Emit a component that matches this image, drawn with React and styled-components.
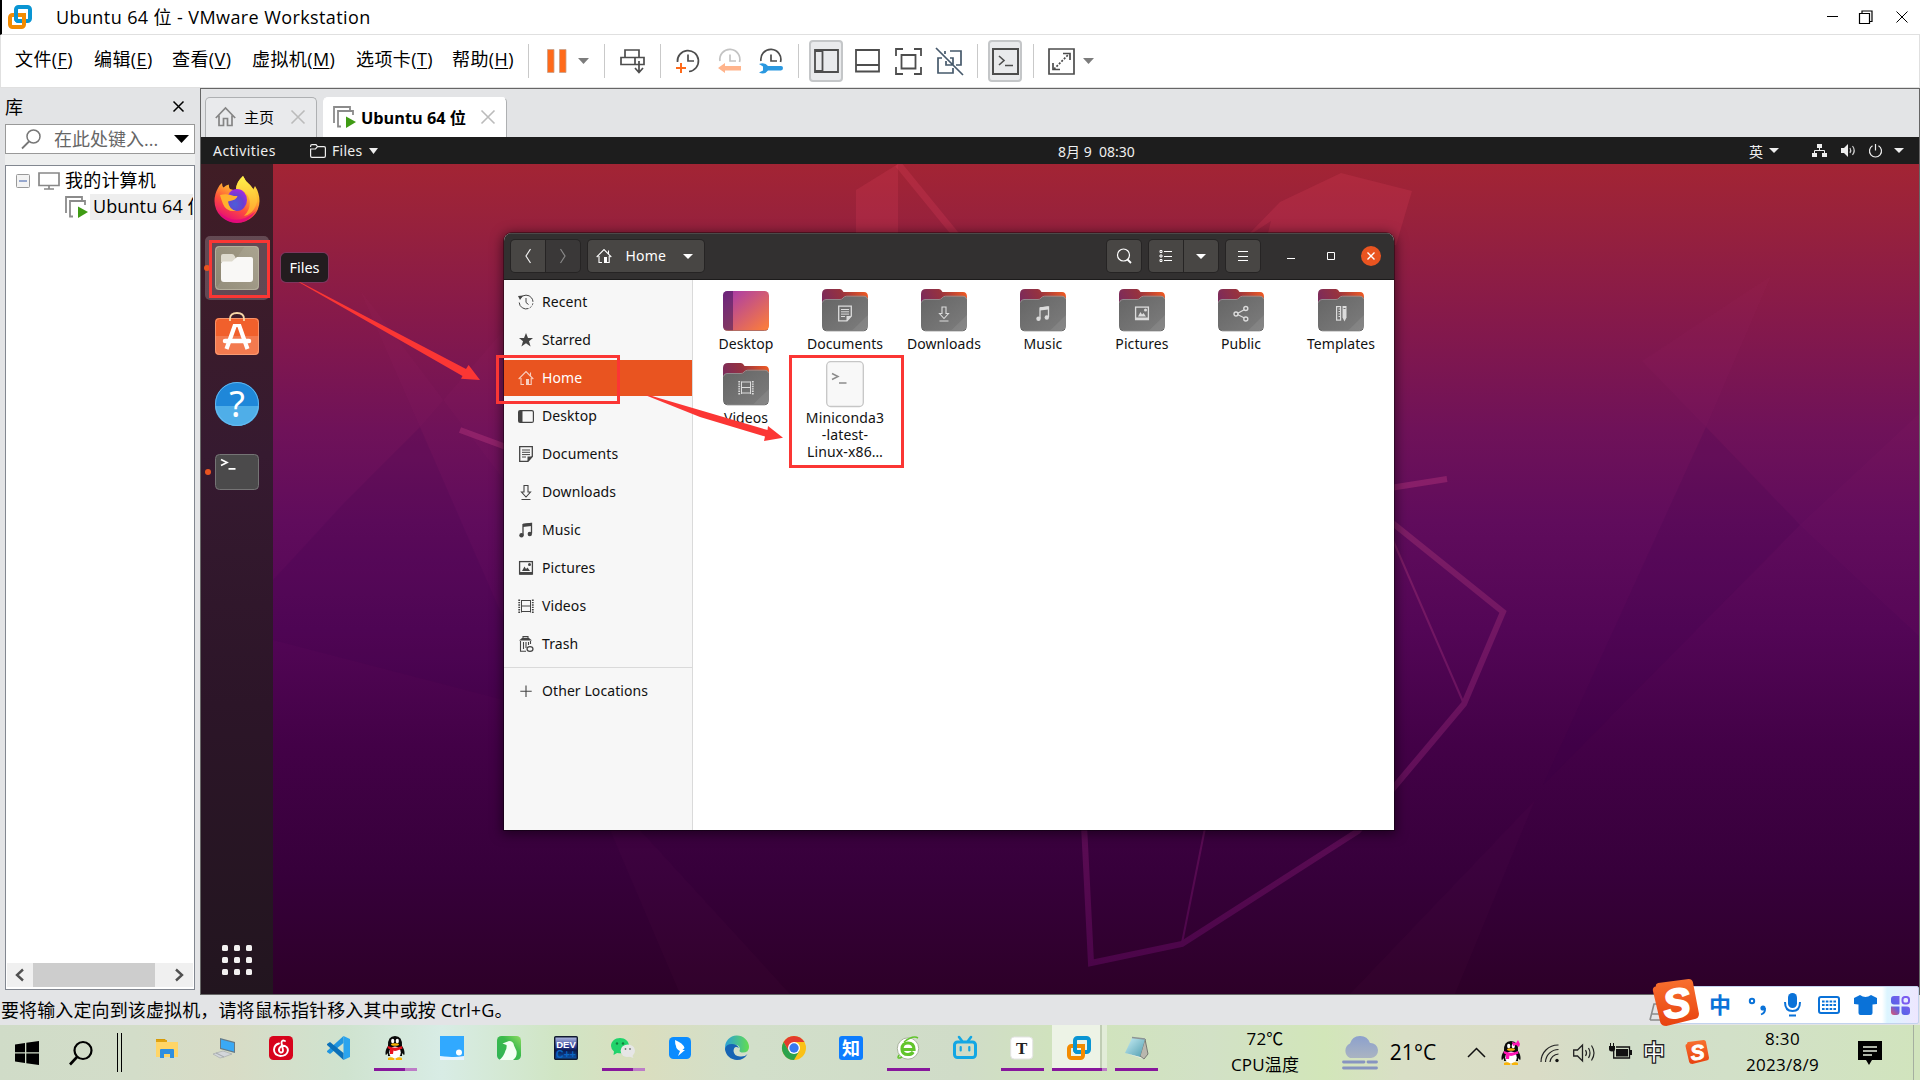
import React from "react";
import styled, { createGlobalStyle, css } from "styled-components";

const winFont = `"Open Sans", "Noto Sans CJK SC", sans-serif`;
const ubuntuFont = `"Noto Sans", "Noto Sans CJK SC", sans-serif`;

const GlobalStyle = createGlobalStyle`
  * { box-sizing: border-box; }
  body { margin: 0; overflow: hidden; background: #e3e4e6; }
  svg { display: block; flex: none; overflow: visible; }
`;

const Screen = styled.div`
  position: relative;
  display: flex;
  flex-direction: column;
  width: 1920px;
  height: 1080px;
  overflow: hidden;
  background: #e3e4e6;
  color: #000;
  font-family: ${winFont};
  font-size: 18px;
  white-space: nowrap;
`;

/* ---------- window chrome ---------- */
const TitleBar = styled.header`
  display: flex;
  align-items: center;
  height: 35px;
  padding: 0 7px 0 6px;
  background: #fff;
  border-bottom: 1px solid #e0e0e0;
  border-left: 2px solid #000;
`;
const Title = styled.div`
  margin-left: 24px;
  flex: 1;
  line-height: 34px;
  letter-spacing: 0.4px;
`;
const WindowControls = styled.div`
  display: flex;
  align-items: center;
  gap: 23px;
  padding-right: 5px;
`;
const MenuBar = styled.nav`
  display: flex;
  align-items: center;
  height: 53px;
  padding-left: 14px;
  background: #fff;
  border: 1px solid #e0e0e0;
  border-top: 0;
`;
const MenuItem = styled.div`
  width: ${(p) => p.$w}px;
  line-height: 48px;
  height: 52px;
  letter-spacing: 0.4px;
  u { text-underline-offset: 2px; text-decoration-thickness: 1px; }
`;
const Divider = styled.i`
  width: 1px;
  height: 34px;
  background: #c9c9c9;
`;
const Tool = styled.div`
  display: flex;
  align-items: center;
  justify-content: center;
  width: ${(p) => p.$w || 34}px;
  height: 42px;
  margin-left: ${(p) => p.$ml || 0}px;
  border-radius: 4px;
  border: 2px solid ${(p) => (p.$on ? "#c4c6c8" : "transparent")};
  background: ${(p) => (p.$on ? "#e9eaec" : "transparent")};
`;

/* ---------- library ---------- */
const Body = styled.main`
  display: flex;
  height: 907px;
`;
const Library = styled.aside`
  display: flex;
  flex-direction: column;
  width: 200px;
  padding: 0 5px 0 5px;
`;
const LibraryHead = styled.div`
  display: flex;
  justify-content: space-between;
  align-items: center;
  height: 36px;
  padding: 0 11px 0 0;
`;
const SearchBox = styled.div`
  display: flex;
  align-items: center;
  height: 30px;
  padding: 0 5px 0 15px;
  border: 1px solid #999;
  background: #fff;
  color: #666;
  span { margin-left: 13px; flex: 1; line-height: 26px; }
`;
const Spacer = styled.div`
  height: 11px;
  background: #eeefef;
`;
const Tree = styled.div`
  display: flex;
  flex-direction: column;
  width: 190px;
  height: 825px;
  padding: 2px 1px 2px;
  overflow: hidden;
  border: 1px solid #828790;
  background: #fff;
`;
const TreeRow = styled.div`
  display: flex;
  align-items: center;
  height: 26px;
  padding-left: ${(p) => p.$pad}px;
  overflow: hidden;
`;
const TreeText = styled.span`
  flex: 1;
  margin-left: ${(p) => p.$ml}px;
  padding-left: 3px;
  height: 26px;
  line-height: 24px;
  overflow: hidden;
  background: ${(p) => (p.$sel ? "#eeeeee" : "none")};
  letter-spacing: ${(p) => (p.$sel ? 0.1 : 0.2)}px;
`;
const ScrollBar = styled.div`
  display: flex;
  align-items: center;
  height: 24px;
  margin-top: auto;
  padding: 0 8px 0 7px;
  background: #f0f0f0;
`;
const Thumb = styled.i`
  width: 123px;
  height: 24px;
  margin: 0 19px 0 8px;
  background: #cdcdcd;
`;

/* ---------- virtual machine view ---------- */
const Machine = styled.section`
  display: flex;
  flex-direction: column;
  width: 1720px;
  border: 1px solid #666;
`;
const Tabs = styled.div`
  display: flex;
  align-items: flex-end;
  gap: 6px;
  height: 48px;
  padding-left: 4px;
`;
const Tab = styled.div`
  display: flex;
  align-items: center;
  width: ${(p) => p.$w}px;
  height: 40px;
  padding: 0 11px 2px 9px;
  border: 1px solid ${(p) => (p.$on ? "#fff" : "#aeb0b2")};
  border-bottom: 0;
  border-right-color: #aeb0b2;
  border-radius: 5px 5px 0 0;
  background: ${(p) => (p.$on ? "#fff" : "#e9eaec")};
  font-size: ${(p) => (p.$on ? 16.3 : 15)}px;
  font-weight: ${(p) => (p.$on ? 700 : 400)};
  span { margin-left: ${(p) => (p.$on ? 5 : 8)}px; flex: 1; }
`;
const TopBar = styled.div`
  display: flex;
  align-items: center;
  height: 27px;
  padding-left: 12px;
  background: #1d1d1d;
  color: #efefef;
  font-family: ${ubuntuFont};
  font-size: 14px;
`;
const BarText = styled.span`
  width: ${(p) => p.$w}px;
  margin-left: ${(p) => p.$ml || 0}px;
  letter-spacing: ${(p) => p.$ls || 0}px;
  white-space: pre;
`;
const Slot = styled.span`
  margin-left: ${(p) => p.$ml}px;
`;
const Desktop = styled.div`
  position: relative;
  display: flex;
  flex: 1;
  overflow: hidden;
  background: linear-gradient(#a32434 0, #99223b 6%, #85194b 19%, #6f1259 32%, #600c5c 43%, #530656 56%, #430147 70%, #36003a 86%, #2d0028 100%);
`;
const Wallpaper = styled.svg`
  position: absolute;
  left: 0;
  top: 0;
`;
const Dock = styled.div`
  position: relative;
  display: flex;
  flex-direction: column;
  align-items: center;
  width: 72px;
  height: 830px;
  padding: 4px 0 19px;
  background: linear-gradient(#401d25, #361a30 35%, #2c1528 65%, #22151f);
`;
const DockItem = styled.div`
  display: flex;
  align-items: center;
  justify-content: center;
  width: 64px;
  height: 64px;
  margin-bottom: 4px;
  padding-bottom: ${(p) => p.$lift || 0}px;
  border-radius: 5px;
  background: ${(p) => (p.$on ? "rgba(255,255,255,.2)" : "none")};
`;
const AppsButton = styled.div`
  display: grid;
  grid-template-columns: repeat(3, 6px);
  gap: 6px;
  margin-top: auto;
  i { width: 6px; height: 6px; border-radius: 1.5px; background: #f2f0f0; }
`;
const Tooltip = styled.div`
  position: absolute;
  left: 79px;
  top: 88px;
  width: 49px;
  height: 31px;
  border: 1px solid rgba(150, 60, 110, 0.8);
  border-radius: 6px;
  background: #231c1f;
  color: #fff;
  font: 14.5px/28px ${ubuntuFont};
  text-align: center;
`;

/* ---------- file manager ---------- */
const FileWindow = styled.div`
  position: absolute;
  left: 303px;
  top: 69px;
  display: flex;
  flex-direction: column;
  width: 890px;
  height: 597px;
  overflow: hidden;
  border-radius: 8px 8px 0 0;
  background: #fff;
  font-family: ${ubuntuFont};
  font-size: 14px;
`;
const WindowShadow = styled.div`
  position: absolute;
  left: 303px;
  top: 69px;
  width: 890px;
  height: 597px;
  border-radius: 8px 8px 0 0;
  box-shadow: 0 2px 12px 2px rgba(0, 0, 0, 0.5), 0 0 0 1px rgba(0, 0, 0, 0.35);
`;
const HeaderBar = styled.div`
  display: flex;
  align-items: center;
  height: 47px;
  padding: 0 13px 1px 7px;
  background: #323030;
  border-top: 1px solid #4b4949;
  border-bottom: 1px solid #1c1b1b;
  color: #fff;
`;
const HeaderButton = styled.div`
  display: flex;
  align-items: center;
  justify-content: center;
  width: ${(p) => p.$w || 34}px;
  height: 32px;
  margin-left: ${(p) => p.$ml || 0}px;
  padding-right: ${(p) => p.$pr || 0}px;
  border-radius: ${(p) => p.$r || "4px"};
  background: ${(p) => (p.$dim ? "#3a3838" : "#484644")};
  box-shadow: 0 0 0 1px #262424;
  span { width: 57px; margin-left: 14px; letter-spacing: 0.2px; line-height: 32px; height: 32px; }
`;
const Stretch = styled.i`
  flex: 1;
`;
const CloseButton = styled.div`
  display: grid;
  place-items: center;
  width: 20px;
  height: 20px;
  margin-left: 26px;
  border-radius: 50%;
  background: #e95420;
`;
const WindowBody = styled.div`
  display: flex;
  flex: 1;
`;
const Places = styled.div`
  width: 189px;
  padding-top: 4px;
  border-right: 1px solid #dadada;
  background: #f7f7f7;
`;
const Place = styled.div`
  display: flex;
  align-items: center;
  height: 36px;
  margin-bottom: 2px;
  padding: 0 0 1px 14px;
  color: ${(p) => (p.$on ? "#fff" : "#111")};
  background: ${(p) => (p.$on ? "#e95420" : "none")};
  svg { color: ${(p) => (p.$on ? "#f9cfc0" : "#444")}; }
  span { margin-left: 8px; letter-spacing: 0.08px; }
`;
const PlacesRule = styled.div`
  height: 1px;
  margin: 5px 0;
  background: #dadada;
`;
const FileGrid = styled.div`
  display: grid;
  grid-template-columns: repeat(6, 99px) 101px;
  grid-auto-rows: 74px;
  padding: 9px 0 0 3.5px;
  height: 200px;
`;
const FileItem = styled.div`
  display: flex;
  flex-direction: column;
  align-items: center;
  text-align: center;
  line-height: 17px;
  color: #111;
`;
const FileLabel = styled.div`
  margin-top: ${(p) => (p.$tall ? 1 : 4)}px;
  letter-spacing: ${(p) => (p.$tall ? 0.15 : 0.08)}px;
`;
const FileIconSlot = styled.div`
  margin-top: -2px;
`;
const Annotations = styled.svg`
  position: absolute;
  left: 0;
  top: 0;
  pointer-events: none;
`;

/* ---------- status + taskbar ---------- */
const StatusBar = styled.div`
  height: 30px;
  padding-left: 1px;
  line-height: 31px;
  letter-spacing: 0.12px;
`;
const InputBar = styled.div`
  position: absolute;
  left: 1660px;
  top: 986px;
  display: flex;
  align-items: center;
  width: 259px;
  height: 38px;
  padding-left: 48px;
  border: 1px solid #c3d3ee;
  border-radius: 2px;
  background: linear-gradient(90deg, #fff 86%, #dcf5ff 88%, #eee6ff);
  color: #0a72d8;
  b { width: 22px; font-size: 22px; line-height: 28px; height: 30px; }
`;
const InputLogo = styled.svg`
  position: absolute;
  left: 1647px;
  top: 979px;
`;
const Taskbar = styled.footer`
  display: flex;
  align-items: center;
  height: 55px;
  padding-left: 15px;
  background: linear-gradient(90deg, #d0dcc8 0, #d3ddc9 7%, #d8dcc6 12%, #cfe3cf 18%, #d8ece5 23%, #d0e5c4 29%, #dadebf 33.5%, #d2dfca 39%, #d0dcc8 50%, #d0e4bb 56%, #d2e1c6 63%, #d2e6b9 69%, #d9dfc6 73%, #dadcc6 80%, #d1dec9 85%, #d2e0c8 90%, #d1e4bd 100%);
`;
const TaskSeparator = styled.i`
  width: 5px;
  height: 39px;
  margin: 0 17px 0 24px;
  border: solid #000;
  border-width: 0 1px;
`;
const Task = styled.div`
  position: relative;
  display: flex;
  justify-content: center;
  align-items: center;
  width: 57px;
  height: 55px;
  padding: 0 1px 9px 0;
  ${(p) => p.$on && css`
    background: linear-gradient(90deg, transparent 1px, #edf3e6 1px 49px, #c0cdb4 49px 51px, #e2ecd8 51px 56px, transparent 56px) 0 0 / 57px 43px no-repeat;
  `}
  &::after {
    content: "";
    position: absolute;
    bottom: 9px;
    left: ${(p) => (p.$on ? 1 : 7)}px;
    width: ${(p) => (p.$line ? (p.$on ? 55 : 43) : 0)}px;
    height: 3px;
    background: linear-gradient(90deg, #87179c ${(p) => p.$line || 100}%, #bd7cc7 ${(p) => p.$line || 100}%);
  }
`;
const TrayItem = styled.div`
  display: flex;
  justify-content: center;
  width: ${(p) => p.$w}px;
  margin-left: ${(p) => p.$ml}px;
  padding-bottom: ${(p) => p.$lift || 0}px;
  font-size: ${(p) => p.$fs || 17}px;
  line-height: 25.5px;
  letter-spacing: ${(p) => p.$ls || 0}px;
  text-align: center;
`;
const OutlinedGlyph = styled.span`
  color: #fff;
  font-size: 22px;
  -webkit-text-stroke: 2.6px #222;
  paint-order: stroke fill;
`;
const TrayEdge = styled.i`
  width: 1px;
  height: 55px;
  margin-left: 31px;
  background: #a5afa0;
`;

/* ---------- icons ---------- */
const Svg = ({ w = 16, h = w, vb, children, ...rest }) => (
  <svg width={w} height={h} viewBox={vb || `0 0 ${w} ${h}`} fill="none" {...rest}>{children}</svg>
);
const Caret = ({ w = 10, h = 5, c = "#fff" }) => (
  <Svg w={w} h={h}><path d={`M0 0H${w}L${w / 2} ${h}Z`} fill={c} /></Svg>
);
const Cross = ({ s = 12, c = "#000", t = 1.3 }) => (
  <Svg w={s}><path d={`M.5 .5L${s - 0.5} ${s - 0.5}M${s - 0.5} .5L.5 ${s - 0.5}`} stroke={c} strokeWidth={t} /></Svg>
);
const VmLogo = () => (
  <Svg w={24}>
    <rect x="8" y="2" width="14" height="14" rx="2.5" stroke="#0a95d3" strokeWidth="4" />
    <path d="M8 10H4.5A2.5 2.5 0 0 0 2 12.5V19.5A2.5 2.5 0 0 0 4.5 22H13.5A2.5 2.5 0 0 0 16 19.5V10H8" stroke="#f38b00" strokeWidth="4" />
    <path d="M8 6V13.5A2.5 2.5 0 0 0 10.5 16H14" stroke="#0a95d3" strokeWidth="4" />
  </Svg>
);
const VmRun = () => (
  <Svg w={23} h={22}>
    <path d="M1 17V1H17V4M8 20.5H5V5H20V9" stroke="#8b8b8b" strokeWidth="1.8" />
    <path d="M13 10.5L23 16L13 22Z" fill="#3f9b14" />
  </Svg>
);
const HouseOutline = () => (
  <Svg w={21} h={20}><path d="M.8 11L10.5 1L20.2 11M4 8.5V18.5H8.5V11.5H12.5V18.5H17V8.5" stroke="#858585" strokeWidth="1.7" /></Svg>
);
const Home16 = () => (
  <Svg w={16}><path d="M.7 9L8 1.5L15.3 9M3 8V14.5H6M11 14.5H13.2V8M12.5 6V2.5" stroke="currentColor" strokeWidth="1.1" /><path d="M8 9H11V15H8Z" fill="currentColor" /></Svg>
);

const glyphs = {
  recent: <><path d="M2.5 4A6.9 6.9 0 1 1 1.2 8.5" stroke="currentColor" strokeDasharray="17 1.5 2 1.5 2 1.5" /><path d="M8 4V8.5L10.5 10.5" stroke="currentColor" /><path d="M0 2L5 1.5L2 6Z" fill="currentColor" /></>,
  star: <path d="M8 1L10 6H15L11 9.2L12.6 14.5L8 11.3L3.4 14.5L5 9.2L1 6H6Z" fill="currentColor" />,
  desktop: <><rect x=".6" y="2.6" width="14.8" height="11.8" rx="1.5" stroke="currentColor" strokeWidth="1.2" /><path d="M1 3H4.5V14H1Z" fill="currentColor" /></>,
  documents: <><path d="M1.7 .7H14.3V10.5L10 15.3H1.7Z" stroke="currentColor" strokeWidth="1.3" /><path d="M4 4H12M4 6.3H12M4 8.6H12M4 11H8" stroke="currentColor" /><path d="M9.5 10.5H14.5L9.5 15.5Z" fill="currentColor" /></>,
  downloads: <path d="M6 1.5H10V8H12.5L8 13L3.5 8H6ZM3.5 15.5H12.5" stroke="currentColor" strokeWidth="1.1" />,
  music: <><path d="M5 13V2.5L13.5 1.5V11.5" stroke="currentColor" strokeWidth="1.3" /><path d="M5 1.8L13.5 .8V4L5 5Z" fill="currentColor" /><circle cx="3.5" cy="13.3" r="2.2" fill="currentColor" /><circle cx="11.8" cy="12" r="2.2" fill="currentColor" /></>,
  pictures: <><rect x="1.6" y="1.6" width="12.8" height="12.5" stroke="currentColor" strokeWidth="1.3" /><path d="M2 12H14V14.5H2ZM4 11L6.5 6.5L8 9L9.5 7.5L12 11Z" fill="currentColor" /><circle cx="11.5" cy="4.5" r="1.5" fill="currentColor" /></>,
  videos: <><path d="M3.5 2V14.5M12.5 2V14.5M3.5 2.5H12.5M3.5 8H12.5M3.5 13.5H12.5" stroke="currentColor" /><path d="M1.2 1.5V15M14.8 1.5V15" stroke="currentColor" strokeWidth="1.8" strokeDasharray="1.4 1" /></>,
  trash: <><path d="M1 4.5L4 2H11L14 4.5Z" fill="currentColor" /><path d="M5 2V.6H10V2M2.5 5V15.3H8M5.5 6V13M8 6V12M10.5 6V9M12.5 5V8" stroke="currentColor" strokeWidth="1.1" /><ellipse cx="12" cy="13" rx="3" ry="2.3" stroke="currentColor" strokeWidth="1.2" /></>,
  plus: <path d="M8 2.5V14M2.3 8.3H13.7" stroke="currentColor" strokeWidth="1.1" />,
  share: <><path d="M12.5 3.5L3.5 8.5L12.5 13" stroke="currentColor" strokeWidth="1.2" /><g fill="#6f6f6f" stroke="currentColor" strokeWidth="1.4"><circle cx="12.8" cy="3" r="2" /><circle cx="3" cy="8.5" r="2" /><circle cx="12.8" cy="13.5" r="2" /></g></>,
  templates: <><rect x="3.6" y="1.1" width="4" height="13.5" stroke="currentColor" strokeWidth="1.2" /><path d="M5.5 3.5H7.5M5.5 6H7.5M5.5 8.5H7.5M5.5 11H7.5" stroke="currentColor" /><path d="M9.5 .5H13.5V12L11.5 16L9.5 12Z" fill="currentColor" /><path d="M10.5 3H12.5" stroke="#6f6f6f" /></>,
};
const Glyph = ({ name }) => (name === "home" ? <Home16 /> : <Svg w={16}>{glyphs[name]}</Svg>);

const Folder = ({ glyph }) => (
  <Svg w={46} h={42}>
    <path d="M0 5Q0 0 5 0H18Q20 0 21.5 3H42Q46 3 46 8V20H0Z" fill="url(#folderBack)" />
    <path d="M0 15Q0 11 4 11H18Q20 11 21 9.5T24.5 7.5H42Q46 7.5 46 11.5V37Q46 41.5 41.5 41.5H4.5Q0 41.5 0 37Z" fill="url(#folderFront)" />
    <path d="M.5 13.5Q1 10.5 4 10.5H18Q20 10.5 21 9T24.5 7.2H42Q45 7.2 45.6 10" stroke="#949494" strokeWidth=".9" />
    <path d="M46 26V37Q46 41.5 41.5 41.5H30Z" fill="#fff" opacity=".08" />
    <path d="M1 40Q2.5 41.8 4.5 41.8H41.5Q44 41.8 45 40" stroke="#505050" strokeWidth=".8" />
    <g color="#dcdcdc" transform="translate(15 16.5)">{glyphs[glyph]}</g>
  </Svg>
);
const DesktopIcon = () => (
  <Svg w={46} h={42}>
    <rect y="2" width="46" height="39.5" rx="4.5" fill="url(#deskGrad)" />
    <path d="M4.5 2H10V41.5H4.5Q0 41.5 0 37V6.5Q0 2 4.5 2Z" fill="#401858" opacity=".55" />
    <path d="M1 40Q2.5 41.5 4.5 41.5H41.5Q44 41.5 45 40" stroke="#a35a50" strokeWidth=".8" />
  </Svg>
);
const ScriptIcon = () => (
  <Svg w={38} h={47}>
    <rect x=".7" y=".7" width="36.6" height="44.8" rx="4" fill="#f8f8f8" stroke="#c6c6c6" strokeWidth="1.3" />
    <path d="M6 12.5L12 15.5L6 18.5M13 22H20.5" stroke="#8c8c8c" strokeWidth="1.5" />
  </Svg>
);

const HiddenDefs = styled.svg`
  position: absolute;
`;
const Gradients = () => (
  <HiddenDefs width="0" height="0">
    <defs>
      <linearGradient id="folderBack" x1="0" y1=".5" x2="1" y2=".3"><stop offset="0" stopColor="#7b2b5c" /><stop offset=".45" stopColor="#96323f" /><stop offset="1" stopColor="#ee5a24" /></linearGradient>
      <linearGradient id="folderFront" x1="0" y1="0" x2="1" y2="1"><stop offset="0" stopColor="#656565" /><stop offset="1" stopColor="#7d7d7d" /></linearGradient>
      <linearGradient id="deskGrad" x1="0" y1="0" x2="1" y2="1"><stop offset="0" stopColor="#a12fa6" /><stop offset=".2" stopColor="#b5459a" /><stop offset="1" stopColor="#ff8036" /></linearGradient>
      <linearGradient id="foxBody" x1=".8" y1="0" x2=".3" y2="1"><stop offset="0" stopColor="#fff44f" /><stop offset=".35" stopColor="#ffb52e" /><stop offset=".65" stopColor="#ff4f3b" /><stop offset="1" stopColor="#e3067c" /></linearGradient>
      <radialGradient id="foxGlobe" cx=".4" cy=".7" r=".7"><stop offset="0" stopColor="#4b5fd8" /><stop offset=".6" stopColor="#6a3fd0" /><stop offset="1" stopColor="#a02be0" /></radialGradient>
      <linearGradient id="foxTail" x1="0" y1="0" x2="0" y2="1"><stop offset="0" stopColor="#fff34a" /><stop offset="1" stopColor="#ffa02c" /></linearGradient>
      <linearGradient id="filesTile" x1="0" y1="1" x2="1" y2="0"><stop offset="0" stopColor="#8b8470" /><stop offset="1" stopColor="#a39c87" /></linearGradient>
      <linearGradient id="edgeA" x1="0" y1="0" x2="1" y2="0"><stop offset="0" stopColor="#2a9fd8" /><stop offset="1" stopColor="#63dd50" /></linearGradient>
      <linearGradient id="cloud" x1="0" y1="0" x2="0" y2="1"><stop offset="0" stopColor="#8ca0cd" /><stop offset="1" stopColor="#aab4c2" /></linearGradient>
      <linearGradient id="sogou" x1="0" y1="0" x2="0" y2="1"><stop offset="0" stopColor="#f8702f" /><stop offset="1" stopColor="#e8420f" /></linearGradient>
      <linearGradient id="devBg" x1="0" y1="0" x2="0" y2="1"><stop offset="0" stopColor="#b5bfe6" /><stop offset=".45" stopColor="#2b3a92" /><stop offset=".6" stopColor="#0a1a50" /><stop offset="1" stopColor="#0d58b0" /></linearGradient>
      <linearGradient id="note" x1="0" y1="0" x2="1" y2="1"><stop offset="0" stopColor="#c9eef5" /><stop offset="1" stopColor="#4f9db0" /></linearGradient>
      <linearGradient id="birdBg" x1="0" y1="1" x2="1" y2="0"><stop offset="0" stopColor="#2fb357" /><stop offset=".6" stopColor="#3cba4c" /><stop offset="1" stopColor="#8fdc62" /></linearGradient>
      <linearGradient id="gridTint" x1="0" y1="1" x2="1" y2="0"><stop offset="0" stopColor="#e0556a" /><stop offset=".35" stopColor="#5a62e8" /><stop offset="1" stopColor="#8a5cf0" /></linearGradient>
      <linearGradient id="wireFade" gradientUnits="userSpaceOnUse" x1="0" y1="520" x2="0" y2="965"><stop offset="0" stopColor="#7e1e66" /><stop offset=".3" stopColor="#6f1562" /><stop offset="1" stopColor="#4b0549" /></linearGradient>
    </defs>
  </HiddenDefs>
);

const FirefoxIcon = () => (
  <Svg w={46} h={47}>
    <path d="M4 12Q5 9 8 7Q8 10 9.5 11.5Q12 9 15 8.5Q14.5 11 16 13L23 15Q21 8 29 0Q31 5 36 9Q38 11 39 14L41 10Q45.5 17 45.5 25A22.5 22 0 0 1 .5 25Q.5 18 4 12Z" fill="url(#foxBody)" />
    <path d="M22 13Q22 6 29 0Q31 5 36 9Q44 17 43 26Q40 38 30 40Q38 32 35 22Q33 15 22 13Z" fill="url(#foxTail)" />
    <ellipse cx="23" cy="24" rx="10" ry="11" fill="url(#foxGlobe)" />
    <path d="M6 19Q13 17 20 20H23.5Q23 24 14 25.5Q15 33 22 35Q12 36 9 28Q7 23 6 19Z" fill="#ffb12e" />
    <path d="M5 36Q22 52 42 35Q34 47 23 47Q11 47 5 36Z" fill="#e1067f" opacity=".8" />
  </Svg>
);
const FilesIcon = () => (
  <Svg w={44}>
    <rect width="44" height="44" rx="4" fill="url(#filesTile)" />
    <path d="M30 0H40Q44 0 44 4V40Q44 44 40 44H0Z" fill="#fff" opacity=".08" />
    <rect x=".5" y=".5" width="43" height="43" rx="4" stroke="#b8b29f" strokeWidth=".9" />
    <path d="M6 16V10Q6 8 8 8H17Q19 8 20 10.5L21 13H36V16Z" fill="#dedacd" />
    <path d="M6 18Q6 15.5 8.5 15.5H17L22 11H36Q38 11 38 13V33Q38 36 35 36H9Q6 36 6 33Z" fill="#f9f8f6" />
  </Svg>
);
const SoftwareIcon = () => (
  <Svg w={44}>
    <rect y="6" width="44" height="37" rx="4" fill="#f1602c" />
    <path d="M0 24H44V39Q44 43 40 43H4Q0 43 0 39Z" fill="#fff" opacity=".17" />
    <rect x=".5" y="6.5" width="43" height="36" rx="4" stroke="#f8a27c" strokeWidth=".8" />
    <path d="M15 9V7Q15 1 22 1T29 7V9" stroke="#f7d7a8" strokeWidth="1.8" />
    <path d="M20 13L11.5 37M24 13L32.5 37" stroke="#fff" strokeWidth="4.2" />
    <path d="M10 29H34" stroke="#fff" strokeWidth="4.5" strokeLinecap="round" />
    <path d="M18 12H26V15H18Z" fill="#fff" />
  </Svg>
);
const HelpIcon = () => (
  <Svg w={44}>
    <circle cx="22" cy="22" r="22" fill="#1f87d9" />
    <path d="M0 24H44A22 20 0 0 1 0 24Z" fill="#4faee8" />
    <circle cx="22" cy="22" r="21.5" stroke="#6bbcf0" strokeWidth=".9" />
    <text x="22" y="35" textAnchor="middle" fill="#fff" fontFamily="Noto Sans, sans-serif" fontSize="36">?</text>
  </Svg>
);
const TerminalIcon = () => (
  <Svg w={44} h={36}>
    <rect x=".5" y=".5" width="43" height="35" rx="4" fill="#4b4a4b" stroke="#757475" />
    <path d="M6 5.5L12 8.5L6 11.5M13.5 14.8H20.5" stroke="#fff" strokeWidth="1.7" />
  </Svg>
);

const taskIcons = {
  explorer: <Svg w={24}><path d="M1 3H10L12 6H1Z" fill="#d79a05" /><path d="M1 6H23V21H1Z" fill="#ffd567" /><path d="M1 6H12V4H1Z" fill="#e0a312" /><path d="M5 22V14Q5 13 6 13H18Q19 13 19 14V22H15V18H9V22Z" fill="#2f8fe0" /></Svg>,
  laptop: <Svg w={24}><path d="M8 2L23 6V17L8 13Z" fill="#667a86" /><path d="M9 3.5L22 7V15.5L9 12Z" fill="#3aa9f5" /><path d="M4 17L11 15L20 18L12 21ZM1 18L4 17L12 21L8 22Z" fill="#d3d6da" stroke="#a0a4a8" strokeWidth=".6" /></Svg>,
  music: <Svg w={24}><rect width="24" height="24" rx="4.5" fill="#d7041c" /><path d="M16 5Q12.5 3.5 12.5 7L14 14Q14 17 11.5 16.5Q9 15 10.5 12T16 10Q20 12 18.5 16T11.5 20Q5 19 5 13.5Q5.5 8.5 10 7.5" stroke="#fff" strokeWidth="1.9" strokeLinecap="round" /></Svg>,
  code: <Svg w={24}><path d="M17.5 0L24 3V21L17.5 24V0Z" fill="#2aa4ee" /><path d="M17.5 0V7L4 18L1 16V15Z" fill="#2196e0" /><path d="M17.5 24V17L4 6L1 8V9Z" fill="#0b70b8" /></Svg>,
  qq: <Penguin />,
  note: <Svg w={24}><path d="M0 0H24V24H0Z" fill="#31a9ff" /><path d="M0 20Q10 21 14 21T24 20V24H0Z" fill="#e8f4ff" /><circle cx="19" cy="16.5" r="3" fill="#fff" /></Svg>,
  bird: <Svg w={24}><rect width="24" height="24" rx="4.5" fill="url(#birdBg)" /><path d="M5.5 7.5L12 5Q16.5 5 17 9.5L19.5 15Q20.5 21 16 24H2.5Q7 20 8.5 14.5Q10 12 9.5 9Z" fill="#f3fff3" /></Svg>,
  dev: <Svg w={24}><rect x=".7" y=".7" width="22.6" height="22.6" rx="1" fill="url(#devBg)" stroke="#111a30" strokeWidth="1.4" /><text x="12" y="11.5" textAnchor="middle" fill="#fff" fontFamily="Liberation Sans, sans-serif" fontWeight="700" fontSize="9.5">DEV</text><text x="12" y="22" textAnchor="middle" fill="#0b66c4" fontFamily="Liberation Sans, sans-serif" fontWeight="700" fontSize="10.5">C++</text></Svg>,
  wechat: <Svg w={24}><path d="M9 2C4 2 0 5.5 0 10Q0 13 3 15.5L2.5 19L6 17Q18 19 18 10C18 5 14 2 9 2Z" fill="#20d36b" /><ellipse cx="16.8" cy="14.8" rx="7.2" ry="6.3" fill="#e6e6e6" /><path d="M21 19L22.5 22L18 20.5Z" fill="#e6e6e6" /><g fill="#12803e"><circle cx="6" cy="7.5" r="1.2" /><circle cx="12" cy="7.5" r="1.2" /></g><g fill="#777"><circle cx="14.5" cy="13" r=".9" /><circle cx="19" cy="13" r=".9" /></g></Svg>,
  ding: <Svg w={24}><rect x="1" y="1" width="22" height="22" rx="4.5" fill="#0b8cff" /><path d="M7 4Q15 7 16.5 12L14.5 14H17L10 20L12 15Q8 13 8 10Q7 8 7 4Z" fill="#fff" /></Svg>,
  edge: <Svg w={24}><path d="M0 12A12 12 0 0 1 24 11Q24 17 16.5 16.5Q13.5 16 15 13Q14 8 8 9Q2 10 0 15Z" fill="url(#edgeA)" /><path d="M0 13Q1 8 7 8Q12 8 14 12Q9 9 8.5 15Q9 20 15 20.5Q20 21 22.5 18Q19 24 12 24A12 12 0 0 1 0 13Z" fill="#1764b4" /></Svg>,
  chrome: <Svg w={24}><circle cx="12" cy="12" r="12" fill="#fbc116" /><path d="M12 12L6.8 15L1.6 6A12 12 0 0 1 22.4 6H12Z" fill="#e33b2e" /><path d="M1.6 6A12 12 0 0 0 12 24L17.2 15L12 12L6.8 15Z" fill="#2ba24c" /><circle cx="12" cy="12" r="6" fill="#fff" /><circle cx="12" cy="12" r="4.7" fill="#3678f0" /></Svg>,
  zhi: <Svg w={24}><rect width="24" height="24" rx="3" fill="#0d7dff" /><text x="12" y="18.5" textAnchor="middle" fill="#fff" fontFamily="Noto Sans CJK SC, sans-serif" fontWeight="700" fontSize="18">知</text></Svg>,
  ie: <Svg w={24}><circle cx="12" cy="12.5" r="10.7" fill="#fff" stroke="#a9b39d" strokeWidth="1" /><path d="M6 13.5H18Q18 7 12 7T6 13Q6 18.5 12 18.5Q15.5 18.5 17.2 16" stroke="#62c52c" strokeWidth="3.2" /><path d="M3 19Q0 24 6 21M8 6Q17 -1 22 2" stroke="#62c52c" strokeWidth="1.5" /></Svg>,
  bili: <Svg w={24}><path d="M6 1L9 5M18 1L15 5" stroke="#13a7e4" strokeWidth="2.6" strokeLinecap="round" /><rect x="1.5" y="6" width="21" height="15.5" rx="3" stroke="#13a7e4" strokeWidth="3" /><path d="M7.7 11V14.5M16.3 11V14.5" stroke="#13a7e4" strokeWidth="2.2" strokeLinecap="round" /></Svg>,
  typora: <Svg w={24}><rect x=".7" y="1" width="22" height="22" rx="3.5" fill="#fff" stroke="#e3e3e3" /><text x="11.7" y="17.5" textAnchor="middle" fill="#222" fontFamily="Liberation Serif, serif" fontWeight="700" fontSize="17">T</text></Svg>,
  vmware: <VmLogo />,
  notepad: <Svg w={24}><path d="M21 3L24 18L20 23L16 20Z" fill="#b9b7ae" stroke="#555" strokeWidth=".7" /><path d="M8 2L21 3L16 21L1 17Z" fill="url(#note)" /><path d="M8 1.5L21 3" stroke="#8c9496" strokeWidth="1.5" /><path d="M16 21L20 23L1 17Z" fill="#eee" /></Svg>,
};
function Penguin({ scarf = "#e8121d", bow }) {
  return (
    <Svg w={20} h={24}>
      <path d="M3 10Q2.5 0 10 0T17 10Q20 14 19.5 18.5Q18.5 19.5 17 17V20H3V17Q1.5 19.5 .5 18.5Q0 14 3 10Z" fill="#0a0a0a" />
      <ellipse cx="10" cy="16.5" rx="5.8" ry="6" fill="#fff" />
      <ellipse cx="7.7" cy="5" rx="1.6" ry="2.2" fill="#fff" /><ellipse cx="12.3" cy="5" rx="1.6" ry="2.2" fill="#fff" />
      <ellipse cx="10" cy="8.5" rx="4" ry="1.3" fill="#f9b407" />
      <path d="M3 10Q10 13.5 17 10L17.5 12.5Q10 16 8.5 14.5L8 18H5V13.5L2.5 12Z" fill={scarf} />
      <path d="M3 22Q6 20.5 9.5 22.5L9 24H3ZM17 22Q14 20.5 10.5 22.5L11 24H17Z" fill="#f9b407" />
      {bow && <path d="M11 1L15 2L17 -1L19 3L18 6L15 4L12 5Z" fill={scarf} />}
    </Svg>
  );
}
const tasks = [
  ["explorer"], ["laptop"], ["music"], ["code"], ["qq", 71], ["note"], ["bird"], ["dev"], ["wechat", 72],
  ["ding"], ["edge"], ["chrome"], ["zhi"], ["ie", 100], ["bili"], ["typora", 100], ["vmware", 91, true], ["notepad", 100],
];
const menus = [["文件", "F", 79], ["编辑", "E", 78], ["查看", "V", 80], ["虚拟机", "M", 104], ["选项卡", "T", 96], ["帮助", "H", 76]];
const places = [["recent", "Recent"], ["star", "Starred"], ["home", "Home"], ["desktop", "Desktop"], ["documents", "Documents"], ["downloads", "Downloads"], ["music", "Music"], ["pictures", "Pictures"], ["videos", "Videos"], ["trash", "Trash"]];
const folders = [["documents", "Documents"], ["downloads", "Downloads"], ["music", "Music"], ["pictures", "Pictures"], ["share", "Public"], ["templates", "Templates"], ["videos", "Videos"]];

function Toolbar() {
  return (
    <>
      <Divider />
      <Tool $w={24} $ml={16}><Svg w={20} h={24}><path d="M.5 .5H7V23.5H.5ZM12.5 .5H19V23.5H12.5Z" fill="#ff6a1a" stroke="#c9a18a" strokeWidth=".8" /></Svg></Tool>
      <Tool $w={12} $ml={8}><Caret w={11} h={6} c="#7c7c7c" /></Tool>
      <Slot $ml={15}><Divider as="div" /></Slot>
      <Tool $w={26} $ml={14}><Svg w={25} h={25}><path d="M5 8.5V1H19V8.5M1 8.5H24V15.5H1ZM15 8.5V15.5M19 12V23M15 19L19 23.5L23 19" stroke="#4d4d4d" strokeWidth="1.7" /></Svg></Tool>
      <Slot $ml={15}><Divider as="div" /></Slot>
      <Tool $w={24} $ml={15}><Svg w={24} h={24}><path d="M1.5 13A10.5 10.5 0 1 1 13 22.5M12 5.5V12H18" stroke="#4d4d4d" strokeWidth="1.7" /><path d="M5 14V24M0 19H10" stroke="#ff6a1a" strokeWidth="2" /></Svg></Tool>
      <Tool $w={24} $ml={18}><Svg w={24} h={24}><path d="M2 12A10 10 0 1 1 21.5 13M12 5.5V12H18" stroke="#c3c3c3" strokeWidth="1.7" /><path d="M0 19L7 14V17H23V21.5H7V24Z" fill="#ffb48c" /></Svg></Tool>
      <Tool $w={24} $ml={17}><Svg w={24} h={24}><path d="M2 12A10 10 0 1 1 21.5 13M12 5.5V12H18" stroke="#4d4d4d" strokeWidth="1.7" /><path d="M0 15Q6 13 9 17H22Q24 17 24 19T22 21.5H9Q6 26 0 23.5L4 21.5V17.5Z" fill="#2a98e0" /></Svg></Tool>
      <Slot $ml={15}><Divider as="div" /></Slot>
      <Tool $on $ml={10}><Svg w={25} h={24}><path d="M1 1H24V23H1ZM8.5 1V23M1 2H8M1 22H8" stroke="#4d4d4d" strokeWidth="1.8" /></Svg></Tool>
      <Tool $w={25} $ml={12}><Svg w={25} h={24}><path d="M1 1H24V22.5H1ZM1 16H24" stroke="#4d4d4d" strokeWidth="1.8" /></Svg></Tool>
      <Tool $w={28} $ml={14}><Svg w={27} h={27}><path d="M8 1H1V8M19 1H26V8M8 26H1V19M19 26H26V19M6.5 7H20.5V20.5H6.5Z" stroke="#4d4d4d" strokeWidth="1.8" /></Svg></Tool>
      <Tool $w={28} $ml={14}><Svg w={28} h={27}><path d="M14 3H25V17H20M9 3V6M14 10H17V17H10V13M6 10H2V25H17V20M0 0L27 27" stroke="#46596b" strokeWidth="1.7" /></Svg></Tool>
      <Slot $ml={13}><Divider as="div" /></Slot>
      <Tool $on $ml={10}><Svg w={27} h={27}><path d="M1 1H26V26H1Z" stroke="#4d4d4d" strokeWidth="2" /><path d="M7 8L12 12.5L7 17M13 17.5H21" stroke="#4d4d4d" strokeWidth="1.6" /></Svg></Tool>
      <Slot $ml={11}><Divider as="div" /></Slot>
      <Tool $w={27} $ml={14}><Svg w={27} h={27}><path d="M1 1H26V26H1ZM15 5.5H22V12M5 15V21.5H12" stroke="#4d4d4d" strokeWidth="1.7" /><path d="M6 21L21 6" stroke="#4d4d4d" strokeWidth="1.7" strokeDasharray="2 1.5" /></Svg></Tool>
      <Tool $w={12} $ml={7}><Caret w={11} h={6} c="#7c7c7c" /></Tool>
    </>
  );
}

function WallpaperArt() {
  return (
    <Wallpaper width="1718" height="830" viewBox="201 164 1718 830" fill="none">
      <g fill="#e0405a" opacity=".22">
        <path d="M856 190L898 164V240H856Z" />
        <path d="M1280 202L1341 173L1412 191L1396 245H1265L1271 221L1245 238Z" />
      </g>
      <path d="M898 164L960 240" stroke="#e0405a" strokeOpacity=".25" strokeWidth="7" />
      <path d="M460 430L506 447M1390 488L1447 479" stroke="#c03a80" strokeOpacity=".38" strokeWidth="6" />
      <path d="M1390 521L1503 612L1464 704L1390 792L1358 831L1182 944L1091 963L1084 825" stroke="url(#wireFade)" strokeWidth="6" />
      <path d="M1392 538L1464 704M1205 828L1182 943" stroke="url(#wireFade)" strokeWidth="2" />
      <g fill="#30004a" opacity=".12">
        <path d="M420 427L345 502L273 580V640L504 700V620Z" />
        <path d="M1706 427L1800 525L1543 785Z" />
      </g>
      <g fill="#ff60b0" opacity=".025">
        <path d="M360 290L504 480V330L420 427Z" />
        <path d="M1642 361L1771 276L1706 427Z" />
        <path d="M1800 525L1919 414V636Z" />
        <path d="M1535 800L1455 994H1350Z" />
        <path d="M610 830L680 994H790L640 830Z" />
      </g>
    </Wallpaper>
  );
}

function Nautilus() {
  return (
    <>
      <WindowShadow />
      <FileWindow>
        <HeaderBar>
          <HeaderButton $r="4px 0 0 4px" $pr={1}><Svg w={8} h={16}><path d="M6.5 1L2 8L6.5 15" stroke="#eee" strokeWidth="1.2" /></Svg></HeaderButton>
          <HeaderButton $dim $ml={1} $r="0 4px 4px 0"><Svg w={8} h={16}><path d="M1.5 1L6 8L1.5 15" stroke="#888" strokeWidth="1.2" /></Svg></HeaderButton>
          <HeaderButton $w={116} $ml={8} $pr={4}><Home16 /><span>Home</span><Caret w={10} h={5} /></HeaderButton>
          <Stretch />
          <HeaderButton $pr={1}><Svg w={16}><circle cx="7.5" cy="7" r="6" stroke="#fff" strokeWidth="1.2" /><path d="M11.5 11.5L15 15" stroke="#fff" strokeWidth="1.8" /></Svg></HeaderButton>
          <HeaderButton $ml={8} $r="4px 0 0 4px"><Svg w={14} h={14}><path d="M5 2.5H13M5 7.5H13M5 11.5H13" stroke="#fff" /><path d="M1 1.5H3V3.5H1ZM1 6H3V8H1ZM1 10.5H3V12.5H1Z" stroke="#fff" /></Svg></HeaderButton>
          <HeaderButton $ml={1} $r="0 4px 4px 0"><Caret w={10} h={5} /></HeaderButton>
          <HeaderButton $ml={8}><Svg w={12} h={12}><path d="M1 1.5H11M1 6.5H11M1 10.5H11" stroke="#fff" /></Svg></HeaderButton>
          <Slot $ml={27}><Svg w={8} h={8}><path d="M0 6.5H8" stroke="#fff" /></Svg></Slot>
          <Slot $ml={32}><Svg w={8} h={8}><path d="M.5 .5H7.5V7.5H.5Z" stroke="#fff" /></Svg></Slot>
          <CloseButton><Cross s={8} c="#fff" t={1.4} /></CloseButton>
        </HeaderBar>
        <WindowBody>
          <Places>
            {places.map(([icon, name]) => (
              <Place key={name} $on={name === "Home"}><Glyph name={icon} /><span>{name}</span></Place>
            ))}
            <PlacesRule />
            <Place><Glyph name="plus" /><span>Other Locations</span></Place>
          </Places>
          <FileGrid>
            <FileItem><DesktopIcon /><FileLabel>Desktop</FileLabel></FileItem>
            {folders.map(([icon, name]) => (
              <FileItem key={name}><Folder glyph={icon} /><FileLabel>{name}</FileLabel></FileItem>
            ))}
            <FileItem>
              <FileIconSlot><ScriptIcon /></FileIconSlot>
              <FileLabel $tall>Miniconda3<br />-latest-<br />Linux-x86…</FileLabel>
            </FileItem>
          </FileGrid>
        </WindowBody>
      </FileWindow>
    </>
  );
}

function SogouMark({ size }) {
  return (
    <Svg w={size} vb="0 0 46 46">
      <path d="M4 7Q3 5 6 4L36 0Q39 0 40 3L46 34Q46 38 43 39L14 46Q9 46 8 42L1 12Q0 8 4 7Z" fill="url(#sogou)" />
      <text x="24" y="37.5" textAnchor="middle" fill="#fff" stroke="#fff" strokeWidth="1.8" fontFamily="Liberation Sans, sans-serif" fontStyle="italic" fontWeight="700" fontSize="40" transform="rotate(-8 24 24)">S</text>
    </Svg>
  );
}

export default function App() {
  return (
    <Screen>
      <GlobalStyle />
      <Gradients />
      <TitleBar>
        <VmLogo />
        <Title>Ubuntu 64 位 - VMware Workstation</Title>
        <WindowControls>
          <Svg w={12} h={12}><path d="M3 5.5H14" stroke="#000" /></Svg>
          <Svg w={14} h={14}><path d="M.5 3.5H10.5V13.5H.5ZM3 3V1H13V11.5H11" stroke="#000" strokeWidth="1.2" /></Svg>
          <Cross s={12} t={1} />
        </WindowControls>
      </TitleBar>
      <MenuBar>
        {menus.map(([name, key, w]) => <MenuItem key={key} $w={w}>{name}(<u>{key}</u>)</MenuItem>)}
        <Toolbar />
      </MenuBar>
      <Body>
        <Library>
          <LibraryHead>库<Cross s={11} t={1.5} /></LibraryHead>
          <SearchBox>
            <Svg w={20} h={20}><circle cx="12.5" cy="7.5" r="6.5" stroke="#777" strokeWidth="1.5" /><path d="M8 12.5L1 19.5" stroke="#777" strokeWidth="1.8" /></Svg>
            <span>在此处键入...</span>
            <Caret w={15} h={8} c="#000" />
          </SearchBox>
          <Spacer />
          <Tree>
            <TreeRow $pad={9}>
              <Svg w={14}><rect x=".5" y=".5" width="13" height="13" rx="1" fill="#f3f3f3" stroke="#999" /><path d="M3 7H11" stroke="#3b5ca8" /></Svg>
              <Slot $ml={8}><Svg w={22} h={18}><path d="M1 1H21V13.5H1ZM11 13.5V17M6 17H16" stroke="#888" strokeWidth="1.7" /></Svg></Slot>
              <TreeText $ml={2}>我的计算机</TreeText>
            </TreeRow>
            <TreeRow $pad={58}><VmRun /><TreeText $ml={2} $sel>Ubuntu 64 位</TreeText></TreeRow>
            <ScrollBar>
              <Svg w={11} h={12}><path d="M9 .5L3 6L9 11.5" stroke="#505050" strokeWidth="2.4" /></Svg>
              <Thumb />
              <Svg w={11} h={12}><path d="M2 .5L8 6L2 11.5" stroke="#505050" strokeWidth="2.4" /></Svg>
            </ScrollBar>
          </Tree>
        </Library>
        <Machine>
          <Tabs>
            <Tab $w={112}><HouseOutline /><span>主页</span><Cross s={14} c="#bbb" t={1.6} /></Tab>
            <Tab $w={184} $on><VmRun /><span>Ubuntu 64 位</span><Cross s={14} c="#bbb" t={1.6} /></Tab>
          </Tabs>
          <TopBar>
            <BarText $w={97} $ls={0.45}>Activities</BarText>
            <Svg w={16} h={14}><path d="M.6 3V2Q.6 .6 2 .6H6L7.5 2.6H14Q15.4 2.6 15.4 4V12Q15.4 13.4 14 13.4H2Q.6 13.4 .6 12V5H5.5L7.5 2.6" stroke="#eee" strokeWidth="1.2" /></Svg>
            <BarText $ml={6} $w={37} $ls={0.25}>Files</BarText>
            <Caret w={9} h={6} c="#eee" />
            <BarText $ml={680} $w={691}>8月 9  08:30</BarText>
            <BarText $w={20}>英</BarText>
            <Caret w={10} h={5} c="#eee" />
            <Slot $ml={33}><Svg w={15} h={13}><path d="M5 0H10V4H5ZM0 9H5V13H0ZM10 9H15V13H10Z" fill="#eee" /><path d="M7.5 4V6.5M2.5 9V6.5H12.5V9" stroke="#eee" /></Svg></Slot>
            <Slot $ml={14}><Svg w={15} h={13}><path d="M0 4H3L7 0V13L3 9H0Z" fill="#eee" /><path d="M9 4Q10.5 6.5 9 9M11.5 2Q15 6.5 11.5 11" stroke="#ccc" strokeWidth="1.2" /></Svg></Slot>
            <Slot $ml={13}><Svg w={13} h={13}><path d="M3.5 1.8A6 6 0 1 0 9.5 1.8M6.5 0V6.5" stroke="#eee" strokeWidth="1.2" /></Svg></Slot>
            <Slot $ml={12}><Caret w={10} h={5} c="#eee" /></Slot>
          </TopBar>
          <Desktop>
            <WallpaperArt />
            <Dock>
              <DockItem $lift={2}><FirefoxIcon /></DockItem>
              <DockItem $on><FilesIcon /></DockItem>
              <DockItem $lift={5}><SoftwareIcon /></DockItem>
              <DockItem><HelpIcon /></DockItem>
              <DockItem><TerminalIcon /></DockItem>
              <AppsButton>{Array.from({ length: 9 }, (_, i) => <i key={i} />)}</AppsButton>
            </Dock>
            <Tooltip>Files</Tooltip>
            <Nautilus />
          </Desktop>
        </Machine>
      </Body>
      <StatusBar>要将输入定向到该虚拟机，请将鼠标指针移入其中或按 Ctrl+G。</StatusBar>
      <Taskbar>
        <Svg w={24}><path d="M0 3.5L10 2V11.3H0ZM11.3 1.8L24 0V11.3H11.3ZM0 12.6H10V22L0 20.5ZM11.3 12.6H24V24L11.3 22.2Z" fill="#000" /></Svg>
        <Slot $ml={30}><Svg w={24}><circle cx="14" cy="9.5" r="8.5" stroke="#000" strokeWidth="2.2" /><path d="M8 16L1 23.5" stroke="#000" strokeWidth="2.6" /></Svg></Slot>
        <TaskSeparator />
        {tasks.map(([name, line, on]) => <Task key={name} $line={line} $on={on}>{taskIcons[name]}</Task>)}
        <TrayItem $ml={64} $w={72} $ls={0.15} $lift={2}>72℃<br />CPU温度</TrayItem>
        <TrayItem $ml={41} $w={36}><Svg w={36} h={35}><path d="M8 23A8 8 0 0 1 8 8.5A10.5 10.5 0 0 1 28 8A7.5 7.5 0 0 1 29 23Z" fill="url(#cloud)" /><path d="M1.5 27H22M26 27H34.5M1.5 33H34.5" stroke="#8794c0" strokeWidth="2.8" strokeLinecap="round" /></Svg></TrayItem>
        <TrayItem $ml={12} $w={46} $fs={21} $ls={0.1}>21°C</TrayItem>
        <TrayItem $ml={30} $w={20}><Svg w={19} h={11}><path d="M1 10L9.5 1.5L18 10" stroke="#111" strokeWidth="1.5" /></Svg></TrayItem>
        <TrayItem $ml={15} $w={20}><Penguin scarf="#ff14b4" bow /></TrayItem>
        <TrayItem $ml={19} $w={20}><Svg w={20} h={18}><path d="M1 18A17 17 0 0 1 18.5 1M5.5 18A13 13 0 0 1 18.5 5.5M10 18A9 9 0 0 1 18.5 10" stroke="#222" strokeWidth="1.2" /><circle cx="17" cy="16.5" r="1.7" fill="#111" /></Svg></TrayItem>
        <TrayItem $ml={13} $w={23}><Svg w={23} h={18}><path d="M.7 6H4.5L9.5 1V17L4.5 12H.7Z" stroke="#222" strokeWidth="1.3" /><path d="M12.5 6Q14.5 9 12.5 12M15.5 4Q18.5 9 15.5 14M18.5 1.5Q23.5 9 18.5 16.5" stroke="#222" strokeWidth="1.2" /></Svg></TrayItem>
        <TrayItem $ml={12} $w={24} $lift={3}><Svg w={24} h={16}><path d="M5.7 7V15H21.5V4H8" stroke="#111" strokeWidth="1.3" /><path d="M8 6H20V13.5H8ZM22 7H24V12H22ZM1 3H7V6Q7 8.5 4 8.5T1 6ZM2 0H3V3H2ZM5 0H6V3H5Z" fill="#111" /></Svg></TrayItem>
        <TrayItem $ml={11} $w={22} $lift={2}><OutlinedGlyph>中</OutlinedGlyph></TrayItem>
        <TrayItem $ml={20} $w={24} $lift={1}><SogouMark size={24} /></TrayItem>
        <TrayItem $ml={33} $w={81} $ls={0.3} $lift={2}><span>8:30<br />2023/8/9</span></TrayItem>
        <TrayItem $ml={35} $w={24}><Svg w={24}><path d="M0 0H24V19H14L11 24L8 19H0Z" fill="#000" /><path d="M5 6H19M5 10H19M5 14H14" stroke="#e8efe0" strokeWidth="1.3" /></Svg></TrayItem>
        <TrayEdge />
      </Taskbar>
      <InputBar>
        <b>中</b>
        <Slot $ml={18}><Svg w={18} h={20}><circle cx="3" cy="6" r="2.2" stroke="#0a72d8" strokeWidth="2" /><circle cx="14" cy="13" r="2.6" fill="#0a72d8" /><path d="M16 13Q16.5 18 12 19.5" stroke="#0a72d8" strokeWidth="1.8" /></Svg></Slot>
        <Slot $ml={17}><Svg w={17} h={24}><rect x="4" y="0" width="9" height="15" rx="4.5" fill="#0a72d8" /><path d="M1 9Q1 18 8.5 18T16 9M5 22.5H12" stroke="#0a72d8" strokeWidth="2" /></Svg></Slot>
        <Slot $ml={17}><Svg w={22} h={18}><rect x="1" y="1" width="20" height="16" rx="2" stroke="#0a72d8" strokeWidth="2" /><path d="M4 5.5H18M4 9H18M4 13H18" stroke="#0a72d8" strokeWidth="1.8" strokeDasharray="2.6 1.2" /></Svg></Slot>
        <Slot $ml={14}><Svg w={23} h={20}><path d="M6 0Q11.5 4 17 0L23 3V9L18.5 9.5V18Q18.5 20 16.5 20H6.5Q4.5 20 4.5 18V9.5L0 9V3Z" fill="#0a72d8" /></Svg></Slot>
        <Slot $ml={14}><Svg w={19} h={19}><path d="M3 0H8.5V8.5H3Q0 8.5 0 5.5V3Q0 0 3 0ZM0 10.5H8.5V16Q8.5 19 5.5 19H3Q0 19 0 16ZM10.5 10.5H16Q19 10.5 19 13.5V16Q19 19 16 19H13.5Q10.5 19 10.5 16Z" fill="url(#gridTint)" /><rect x="11.5" y="1" width="6.5" height="6.5" rx="2.5" stroke="#7a5cf0" strokeWidth="2" /></Svg></Slot>
      </InputBar>
      <InputLogo width="54" height="48" fill="none">
        <path d="M3 41L7 25H14M3 41H14M4 35H14" stroke="#8a8a8a" strokeWidth="1.6" />
        <g transform="translate(5 0)"><SogouMark size={47} /></g>
      </InputLogo>
      <Annotations width="1920" height="1080" fill="none">
        <circle cx="208" cy="472" r="3" fill="#e95420" /><circle cx="207" cy="268" r="3" fill="#e95420" />
        <g stroke="#fb3634" strokeWidth="3">
          <rect x="210.5" y="241.5" width="58" height="55" />
          <rect x="497.5" y="356.5" width="121" height="46" />
          <rect x="790.5" y="356.5" width="112" height="110" />
        </g>
        <path d="M298.5 282L301 282.5L466 369L468.6 365L480 380L461 378.7L462.5 376ZM645 395L652 396L767.5 430L768 426L783 437.7L764 441L765 436.5L700 417Z" fill="#fb3634" />
      </Annotations>
    </Screen>
  );
}
